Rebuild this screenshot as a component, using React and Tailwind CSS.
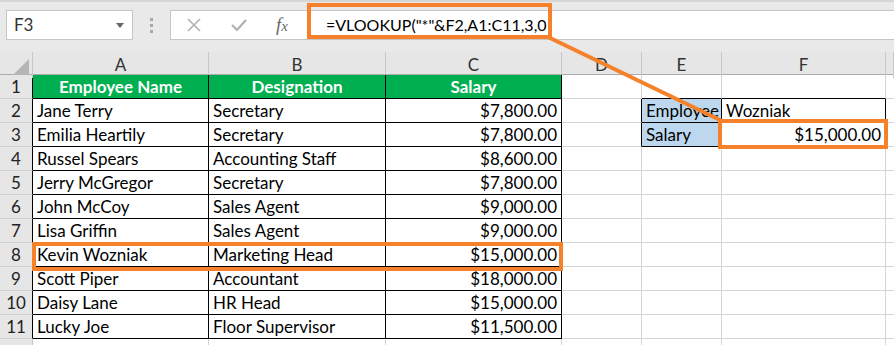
import React from "react";

const FONT = { fontFamily: "Lato, 'Open Sans', sans-serif" };

const cols = ["A", "B", "C", "D", "E", "F", ""];

const people = [
  ["Jane Terry", "Secretary", "$7,800.00"],
  ["Emilia Heartily", "Secretary", "$7,800.00"],
  ["Russel Spears", "Accounting Staff", "$8,600.00"],
  ["Jerry McGregor", "Secretary", "$7,800.00"],
  ["John McCoy", "Sales Agent", "$9,000.00"],
  ["Lisa Griffin", "Sales Agent", "$9,000.00"],
  ["Kevin Wozniak", "Marketing Head", "$15,000.00"],
  ["Scott Piper", "Accountant", "$18,000.00"],
  ["Daisy Lane", "HR Head", "$15,000.00"],
  ["Lucky Joe", "Floor Supervisor", "$11,500.00"],
];

const GRID = "grid grid-cols-[33px_176px_177px_176px_80px_80px_164px_1fr]";

// one worksheet cell, grey gridline unless told otherwise
function Cell({ children, className = "" }) {
  return (
    <div
      className={`h-[24px] border-r border-b border-[#d4d4d4] px-[4px] flex items-center overflow-hidden whitespace-nowrap text-[17px] text-black ${className}`}
    >
      {children}
    </div>
  );
}

function Toolbar() {
  return (
    <div className="h-[52px] bg-[#e9e9e9] border-t-2 border-[#d6d6d6] flex items-start pt-[8px] pl-[6px]">
      {/* name box */}
      <div className="w-[127px] h-[30px] bg-white border border-[#c6c6c6] flex items-center justify-between pl-[7px] pr-[8px] text-[17px] text-[#333]">
        <span>F3</span>
        <span className="w-0 h-0 border-l-[4px] border-r-[4px] border-t-[5px] border-l-transparent border-r-transparent border-t-[#666]" />
      </div>
      <div className="w-[37px] h-[30px] flex flex-col items-center justify-center gap-[3px]">
        <span className="w-[3px] h-[3px] bg-[#a8a8a8]" />
        <span className="w-[3px] h-[3px] bg-[#a8a8a8]" />
        <span className="w-[3px] h-[3px] bg-[#a8a8a8]" />
      </div>
      {/* formula box */}
      <div className="flex-1 h-[30px] bg-white border border-[#c6c6c6] border-r-0 flex items-center">
        <div className="flex items-center gap-[28px] pl-[15px] w-[137px]">
          <svg width="16" height="16" viewBox="0 0 16 16">
            <path d="M2 2L14 14M14 2L2 14" stroke="#b0b0b0" strokeWidth="1.6" />
          </svg>
          <svg width="18" height="16" viewBox="0 0 18 16">
            <path d="M2 8L7 13L16 3" stroke="#b0b0b0" strokeWidth="2.2" fill="none" />
          </svg>
          <span className="text-[19px] italic text-[#6a6a6a]" style={{ fontFamily: "'Liberation Serif', serif" }}>
            f<span className="text-[15px]">x</span>
          </span>
        </div>
        <span className="pl-[18px] text-[16px] text-black">=VLOOKUP("*"&amp;F2,A1:C11,3,0</span>
      </div>
    </div>
  );
}

function ColumnHeader() {
  return (
    <div className={`${GRID} h-[23px] bg-[#e6e6e6] border-b border-[#ababab]`}>
      <div className="relative border-r border-[#c8c8c8]">
        <svg className="absolute right-[3px] bottom-[3px]" width="16" height="16" viewBox="0 0 16 16">
          <path d="M16 0L16 16L0 16Z" fill="#b5b5b5" />
        </svg>
      </div>
      {cols.map((c, i) => (
        <div key={i} className="border-r border-[#c8c8c8] flex items-center justify-center text-[17px] text-[#333]">
          {c}
        </div>
      ))}
    </div>
  );
}

function RowNum({ n, dark }) {
  return (
    <div
      className={`h-[24px] bg-[#e6e6e6] border-b border-[#d0d0d0] border-r flex items-center justify-center text-[17px] text-[#222] ${
        dark ? "border-r-black" : "border-r-[#c8c8c8]"
      }`}
    >
      {n}
    </div>
  );
}

export default function App() {
  return (
    <div className="relative w-[894px] h-[345px] overflow-hidden bg-white" style={FONT}>
      <Toolbar />
      <ColumnHeader />

      {/* row 1: table heading */}
      <div className={GRID}>
        <RowNum n={1} dark />
        <Cell className="bg-[#00b050] text-white font-bold justify-center border-r-black border-b-black">Employee Name</Cell>
        <Cell className="bg-[#00b050] text-white font-bold justify-center border-r-black border-b-black">Designation</Cell>
        <Cell className="bg-[#00b050] text-white font-bold justify-center border-r-black border-b-black">Salary</Cell>
        <Cell />
        <Cell className="border-b-black" />
        <Cell className="border-b-black" />
        <Cell />
      </div>

      {people.map((p, i) => {
        const row = i + 2;
        const lookup = row === 2 || row === 3;
        return (
          <div key={row} className={GRID}>
            <RowNum n={row} dark />
            <Cell className="border-r-black border-b-black">{p[0]}</Cell>
            <Cell className="border-r-black border-b-black">{p[1]}</Cell>
            <Cell className="border-r-black border-b-black justify-end">{p[2]}</Cell>
            <Cell className={lookup ? "border-r-black" : ""} />
            {lookup ? (
              <>
                <Cell className="bg-[#bdd7ee] border-r-black border-b-black">{row === 2 ? "Employee" : "Salary"}</Cell>
                <Cell className={`border-r-black border-b-black ${row === 3 ? "justify-end" : ""}`}>
                  {row === 2 ? "Wozniak" : "$15,000.00"}
                </Cell>
              </>
            ) : (
              <>
                <Cell />
                <Cell />
              </>
            )}
            <Cell />
          </div>
        );
      })}

      {/* row 12 only peeks in at the bottom edge */}
      <div className={GRID}>
        <RowNum />
        <Cell />
        <Cell />
        <Cell />
        <Cell />
        <Cell />
        <Cell />
        <Cell />
      </div>

      {/* callouts */}
      <div className="absolute left-[307px] top-[3px] w-[245px] h-[36px] border-[4px] border-[#f5822a]" />
      <div className="absolute left-[32px] top-[242px] w-[531px] h-[29px] border-[4px] border-[#f5822a]" />
      <div className="absolute left-[718px] top-[119px] w-[170px] h-[30px] border-[4px] border-[#f5822a]" />
      <svg className="absolute left-0 top-0 pointer-events-none" width="894" height="345">
        <line x1="548" y1="37" x2="722" y2="121" stroke="#f5822a" strokeWidth="4" />
      </svg>
    </div>
  );
}
